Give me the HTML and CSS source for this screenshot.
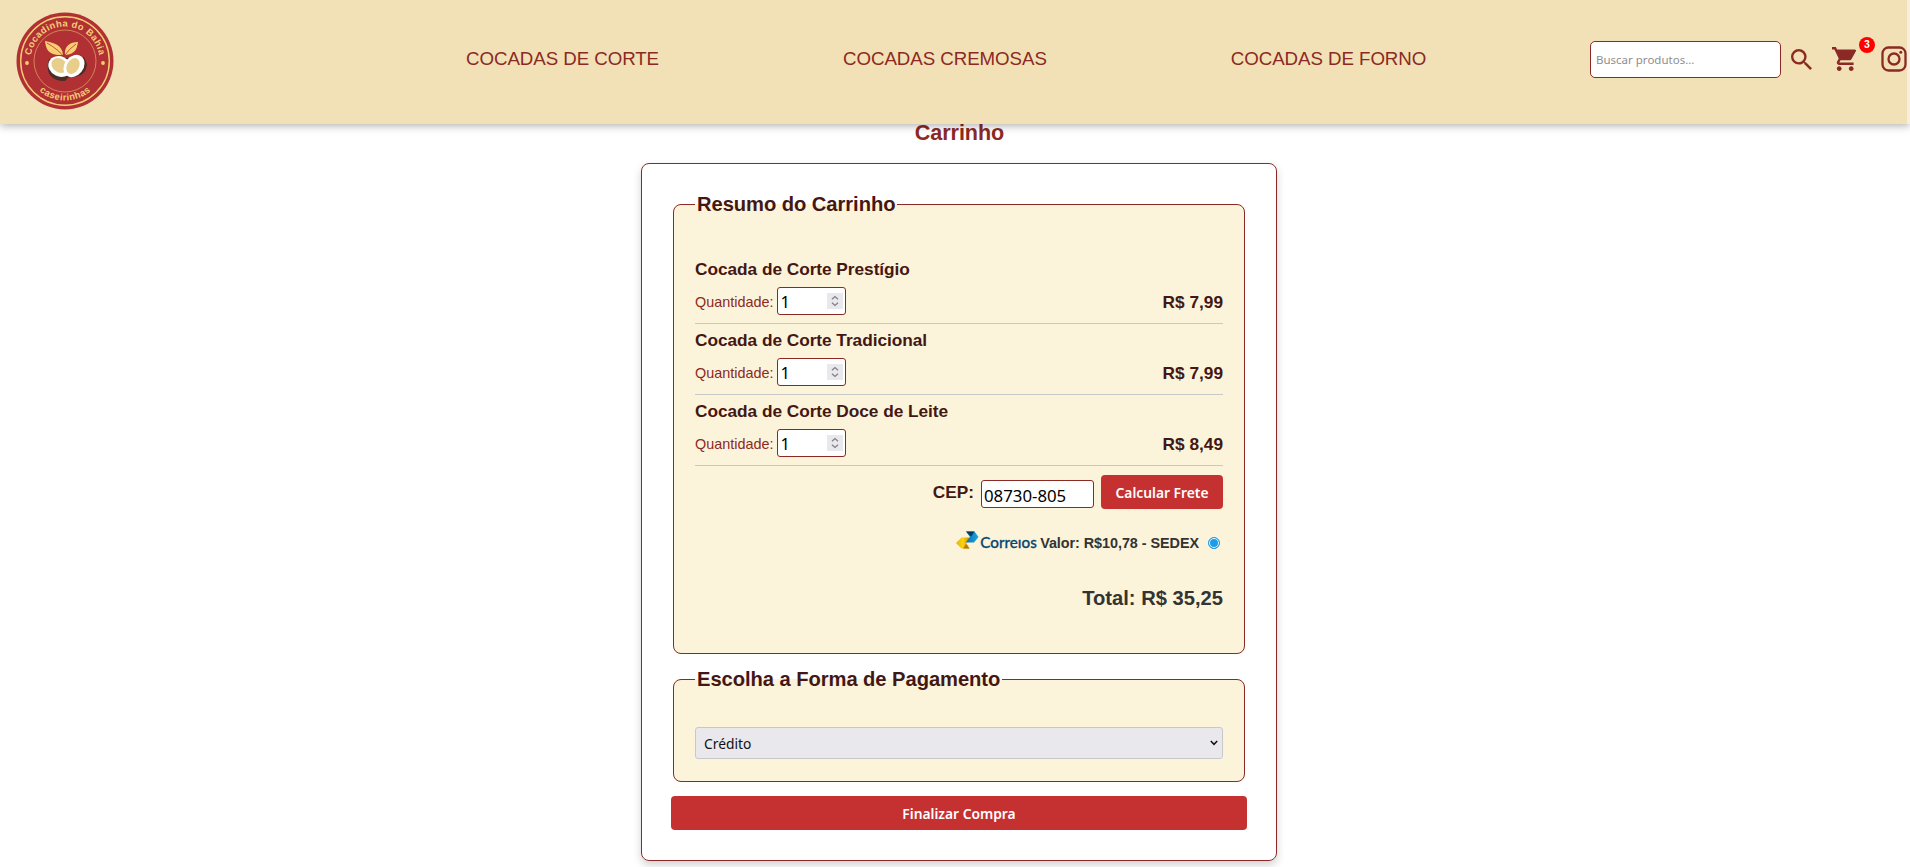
FILE: index.html
```html
<!DOCTYPE html>
<html lang="pt-BR">
<head>
<meta charset="utf-8">
<title>Carrinho</title>
<link rel="stylesheet" href="styles.css">
</head>
<body>
<header class="header">
  <svg class="logo" viewBox="0 0 98 98" width="98" height="98">
    <defs>
      <path id="arc-top" d="M14.5 49 A34.5 34.5 0 0 1 83.5 49"/>
      <path id="arc-bottom" d="M9.500 49 A39.500 39.500 0 0 0 88.500 49"/>
    </defs>
    <circle cx="49" cy="49" r="48.5" fill="#b03034"/>
    <circle cx="49" cy="49" r="44.3" fill="none" stroke="#f6cd74" stroke-width="1.4"/>
    <circle cx="49" cy="49" r="31" fill="none" stroke="#dc9a5c" stroke-width=".8"/>
    <text class="logo-text"><textPath href="#arc-top" startOffset="50%" text-anchor="middle" textLength="97">Cocadinha do Bahia</textPath></text>
    <text class="logo-text"><textPath href="#arc-bottom" startOffset="50%" text-anchor="middle" textLength="56">caseirinhas</textPath></text>
    <circle cx="11" cy="51" r="1.9" fill="#f6cd74"/>
    <circle cx="87" cy="51" r="1.9" fill="#f6cd74"/>
    <path d="M47 43C33 44 30 38 29 29c10 2 17 4 18 14Z" fill="#f9cf74"/>
    <path d="M49 43c-1-9 5-13 13-13-1 6-2 12-13 13Z" fill="#f9cf74"/>
    <path d="M31 31q12 7 17 14M60 32q-7 5-11 11" fill="none" stroke="#b03034" stroke-width=".8"/>
    <path d="M33 47c-4 14 2 22 16 22l4-4q17 1 18-13L68 45Z" fill="#4b2d24"/>
    <ellipse cx="44" cy="54.500" rx="12" ry="10" transform="rotate(25 44 54.500)" fill="#fff"/>
    <ellipse cx="43.500" cy="53.500" rx="8.600" ry="6.800" transform="rotate(35 43.500 53.500)" fill="#e7cf8b"/>
    <ellipse cx="58" cy="54" rx="9.500" ry="12" transform="rotate(38 58 54)" fill="#fff"/>
    <ellipse cx="57" cy="54" rx="6" ry="8.500" transform="rotate(30 57 54)" fill="#e7cf8b"/>
  </svg>
  <nav class="nav">
    <a>COCADAS DE CORTE</a>
    <a>COCADAS CREMOSAS</a>
    <a>COCADAS DE FORNO</a>
  </nav>
  <div class="actions">
    <input class="search" type="text" placeholder="Buscar produtos...">
    <svg class="icon-search" viewBox="3 3 17.500 17.500" width="21" height="21"><path fill="#8b2a24" d="M15.500 14h-.79l-.28-.27A6.471 6.471 0 0 0 16 9.500 6.500 6.500 0 1 0 9.500 16c1.610 0 3.090-.59 4.230-1.570l.27.28v.79l5 4.990L20.490 19l-4.990-5zm-6 0C7.010 14 5 11.990 5 9.500S7.010 5 9.500 5 14 7.010 14 9.500 11.990 14 9.500 14z"/></svg>
    <div class="cart">
      <svg viewBox="1 2 20 20" width="24" height="24"><path fill="#8b2a24" d="M7 18c-1.100 0-1.990.9-1.990 2S5.900 22 7 22s2-.9 2-2-.9-2-2-2zM1 2v2h2l3.600 7.590-1.350 2.450c-.16.280-.25.610-.25.960 0 1.100.9 2 2 2h12v-2H7.420c-.14 0-.25-.11-.25-.25l.03-.12.900-1.630h7.450c.75 0 1.410-.41 1.750-1.030l3.580-6.490A1 1 0 0 0 20 4H5.210l-.94-2H1zm16 16c-1.100 0-1.990.9-1.990 2s.89 2 1.990 2 2-.9 2-2-.9-2-2-2z"/></svg>
      <span class="badge">3</span>
    </div>
    <svg class="icon-instagram" viewBox="0 0 26 26" width="26" height="26" fill="none" stroke="#8b2a24" stroke-width="2.300"><rect x="1.500" y="1.500" width="23" height="23" rx="6"/><circle cx="13" cy="13" r="5.500"/><circle cx="19.800" cy="6.200" r="1.500" fill="#8b2a24" stroke="none"/></svg>
  </div>
</header>
<main class="page">
  <h1 class="title">Carrinho</h1>
  <section class="card">
    <fieldset class="box summary">
      <legend>Resumo do Carrinho</legend>
      <div class="item">
        <div class="name">Cocada de Corte Prestígio</div>
        <div class="line"><label>Quantidade:</label><span class="qty">1<svg class="spin" viewBox="0 0 16 16"><path d="M5 6.200 8 3.500l3 2.700M5 9.800l3 2.700 3-2.700"/></svg></span><span class="price">R$ 7,99</span></div>
      </div>
      <div class="item">
        <div class="name">Cocada de Corte Tradicional</div>
        <div class="line"><label>Quantidade:</label><span class="qty">1<svg class="spin" viewBox="0 0 16 16"><path d="M5 6.200 8 3.500l3 2.700M5 9.800l3 2.700 3-2.700"/></svg></span><span class="price">R$ 7,99</span></div>
      </div>
      <div class="item">
        <div class="name">Cocada de Corte Doce de Leite</div>
        <div class="line"><label>Quantidade:</label><span class="qty">1<svg class="spin" viewBox="0 0 16 16"><path d="M5 6.200 8 3.500l3 2.700M5 9.800l3 2.700 3-2.700"/></svg></span><span class="price">R$ 8,49</span></div>
      </div>
      <div class="cep">
        <label class="cep-label">CEP:</label>
        <input class="cep-input" type="text" value="08730-805">
        <button class="btn calc" type="button">Calcular Frete</button>
      </div>
      <div class="shipping">
        <svg class="correios" viewBox="0 0 82 20" width="82" height="20">
          <defs>
            <linearGradient id="gold"><stop offset="0" stop-color="#e8b10c"/><stop offset=".5" stop-color="#fbd40a"/><stop offset="1" stop-color="#c98708"/></linearGradient>
            <linearGradient id="blue"><stop offset="0" stop-color="#0c6fa8"/><stop offset="1" stop-color="#1ba6e0"/></linearGradient>
          </defs>
          <path d="M5.500 6.500h8.500L10 11.500l3.500 6H5.500L0 12Z" fill="url(#gold)"/>
          <path d="M7 17.500l3-4.500 3.500 4.500Z" fill="#b9780c"/>
          <path d="M10 0.500h8.500l4 5.500-4.500 5.500H9.500L14 6Z" fill="url(#blue)"/>
          <path d="M10 .5h8.500L15 5.500Z" fill="#063a63"/>
          <text class="correios-text" x="24.300" y="17" textLength="56.500" lengthAdjust="spacingAndGlyphs">Correıos</text>
        </svg>
        <span class="ship-value">Valor: R$10,78 - SEDEX</span>
        <span class="radio"></span>
      </div>
      <div class="total">Total: R$ 35,25</div>
    </fieldset>
    <fieldset class="box payment">
      <legend>Escolha a Forma de Pagamento</legend>
      <div class="select"><span>Crédito</span><svg viewBox="0 0 8 6" width="8" height="6"><path d="M.8 1 4 4.300 7.200 1" fill="none" stroke="#111" stroke-width="1.500"/></svg></div>
    </fieldset>
    <button class="btn finish" type="button">Finalizar Compra</button>
  </section>
</main>
</body>
</html>
```
FILE: styles.css
```css
* { box-sizing: border-box; }
body {
  margin: 0;
  height: 867px;
  overflow: hidden;
  background: #fff;
  font-family: "Liberation Sans", sans-serif;
  font-size: 14.4px;
  color: #8b2a24;
}
.header {
  position: relative;
  display: flex;
  align-items: center;
  width: 1910px;
  height: 124px;
  padding: 0 0 6px 16px;
  border-right: 3px solid #f7eedb;
  background: #f2e1b6;
  box-shadow: 0 2px 8px rgba(0, 0, 0, .3);
}
.logo { margin-top: 3px; }
.logo-text { font: bold 9.4px "Liberation Sans", sans-serif; fill: #f6cd74; }
.nav { display: flex; gap: 184px; margin-left: 352px; font-size: 18.72px; letter-spacing: -.06px; }
.actions { display: flex; align-items: center; margin-left: auto; }
.search {
  width: 191px;
  height: 37px;
  padding: 0 5px;
  border: 1px solid #8b2a24;
  border-radius: 5px;
  background: #fff;
  font: 11.5px "Noto Sans", sans-serif;
}
.search::placeholder { color: #8e8e8e; }
.icon-search { margin-left: 10px; }
.cart { position: relative; height: 24px; margin-left: 20px; }
.badge {
  position: absolute;
  left: 27px;
  top: -10px;
  width: 16px;
  height: 16px;
  border-radius: 50%;
  background: #f00;
  color: #fff;
  font-size: 10.5px;
  font-weight: bold;
  line-height: 15px;
  text-align: center;
}
.icon-instagram { margin-left: 25px; }
.page { padding-left: 8px; }
.title {
  width: 636px;
  height: 39px;
  margin: 0 auto;
  padding-left: 1px;
  font-size: 21.6px;
  letter-spacing: -.08px;
  line-height: 17px;
  text-align: center;
}
.card {
  width: 636px;
  height: 698px;
  margin: 0 auto;
  padding: 28px 29px;
  border: 1px solid #8b2a24;
  border-radius: 8px;
  box-shadow: 0 4px 8px rgba(0, 0, 0, .18);
}
.box {
  margin: 0 2px;
  padding: 0 21px;
  border: 1px solid #8b2a24;
  border-radius: 8px;
  background: #fcf4da;
}
.box legend {
  height: 24px;
  padding: 0 2px;
  color: #441714;
  font-size: 20.16px;
  font-weight: bold;
  letter-spacing: -.05px;
  line-height: 24px;
}
.summary { height: 462px; }
.payment { height: 115px; margin-top: 13px; }
.item { height: 71px; border-bottom: 1px solid #c8c8c8; }
.summary .item:first-of-type { height: 108px; padding-top: 37px; }
.name {
  height: 34px;
  color: #441714;
  font-size: 17.28px;
  font-weight: bold;
  letter-spacing: -.04px;
  line-height: 33px;
}
.line { display: flex; align-items: center; height: 28px; }
.line label { padding-top: 2px; }
.qty {
  display: flex;
  align-items: center;
  justify-content: space-between;
  width: 69px;
  height: 28px;
  margin-left: 4px;
  padding: 0 2px;
  border: 1px solid #8b2a24;
  border-radius: 3px;
  background: #fff;
  color: #000;
  font: 16.5px "Noto Sans", sans-serif;
}
.spin { width: 16px; height: 16px; background: #e9e9ed; fill: none; stroke: #808086; stroke-width: 1.3; }
.price { margin-left: auto; padding-top: 2px; color: #441714; font-size: 17.28px; font-weight: bold; }
.cep { display: flex; align-items: center; justify-content: flex-end; height: 34px; margin-top: 9px; }
.cep-label { color: #441714; font-size: 17.28px; font-weight: bold; }
.cep-input {
  width: 113px;
  height: 28px;
  margin: 4px 7px 0;
  padding: 2px 2px 0;
  border: 1px solid #8b2a24;
  border-radius: 3px;
  background: #fff;
  color: #000;
  font: 16.8px "Noto Sans", sans-serif;
}
.btn {
  height: 34px;
  padding: 0;
  border: 0;
  border-radius: 4px;
  background: #c53131;
  color: #fff;
  font: 600 13.8px "Noto Sans", sans-serif;
}
.calc { width: 122px; }
.shipping { display: flex; align-items: center; justify-content: flex-end; height: 20px; margin-top: 22px; }
.correios { overflow: visible; }
.correios-text { font: 500 16px Lato, sans-serif; fill: #0a4672; stroke: #0a4672; stroke-width: .3; }
.ship-value { margin-left: 2px; padding-top: 4px; color: #333; font-weight: bold; letter-spacing: -.05px; }
.radio {
  width: 12px;
  height: 12px;
  margin: 4px 3px 0 9px;
  border: 1px solid #1d9be6;
  border-radius: 50%;
  background: #1d9be6;
  box-shadow: inset 0 0 0 1px #fff;
}
.total { margin-top: 35px; color: #333; font-size: 20.16px; font-weight: bold; line-height: 24px; text-align: right; }
.select {
  display: flex;
  align-items: center;
  justify-content: space-between;
  height: 32px;
  margin-top: 36px;
  padding: 0 4px 0 8px;
  border: 1px solid #c8c8cc;
  border-radius: 3px;
  background: #e9e9ed;
  color: #111;
  font: 13.8px "Noto Sans", sans-serif;
}
.finish { display: block; width: 576px; margin: 14px 0 0; }
```
